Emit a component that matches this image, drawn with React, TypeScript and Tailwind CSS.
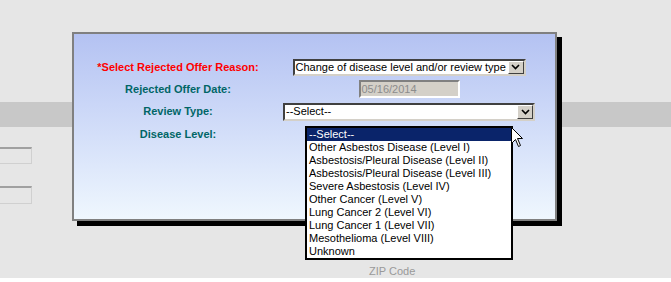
const font = { fontFamily: '"Liberation Sans", Arial, sans-serif' };

const reasons = [
  "Other Asbestos Disease (Level I)",
  "Asbestosis/Pleural Disease (Level II)",
  "Asbestosis/Pleural Disease (Level III)",
  "Severe Asbestosis (Level IV)",
  "Other Cancer (Level V)",
  "Lung Cancer 2 (Level VI)",
  "Lung Cancer 1 (Level VII)",
  "Mesothelioma (Level VIII)",
  "Unknown",
];

const Chevron = () => (
  <svg width="9" height="6" viewBox="0 0 9 6">
    <path d="M1 1 L4.5 4.5 L8 1" fill="none" stroke="#000" strokeWidth="1.6" />
  </svg>
);

const ArrowButton = () => (
  <div className="flex h-full w-[16px] shrink-0 items-center justify-center border border-t-[#fff] border-l-[#fff] border-r-[#404040] border-b-[#404040] bg-[#d4d0c8]">
    <Chevron />
  </div>
);

const Select = ({ text, width, height }: { text: string; width: string; height: string }) => (
  <div
    className={`flex ${width} ${height} items-stretch border-2 border-t-[#404040] border-l-[#404040] border-r-[#d4d0c8] border-b-[#d4d0c8] bg-white font-normal`}
  >
    <div className="flex flex-1 items-center overflow-hidden whitespace-nowrap pl-[1px] text-[11px] text-black">
      {text}
    </div>
    <ArrowButton />
  </div>
);

const Cursor = () => (
  <svg width="13" height="21" viewBox="0 0 13 21" className="absolute left-[511px] top-[127px]">
    <path
      d="M0.5 0.5 L0.5 16.5 L4.5 12.5 L7.5 19.5 L9.5 18.5 L6.5 11.5 L11.5 11.5 Z"
      fill="#fff"
      stroke="#000"
      strokeWidth="1"
    />
  </svg>
);

const App = () => {
  return (
    <div className="relative h-[282px] w-[671px] overflow-hidden bg-white" style={font}>
      {/* page behind the dialog */}
      <div className="flex h-[278px] flex-col bg-[#e6e6e6]">
        <div className="h-[103px]" />
        <div className="h-[25px] bg-[#c8c8c8]" />
        <div className="ml-[-60px] mt-[20px] h-[17px] w-[92px] border border-t-2 border-[#d0d0d0] border-t-[#a0a0a0]" />
        <div className="ml-[-60px] mt-[22px] h-[18px] w-[92px] border border-t-2 border-[#d0d0d0] border-t-[#a0a0a0]" />
        <div className="ml-[369px] mt-[61px] text-[11px] leading-[13px] text-[#999]">ZIP Code</div>
      </div>

      {/* dialog */}
      <div className="absolute left-[72px] top-[32px] h-[189px] w-[485px] border-2 border-[#808080] bg-gradient-to-b from-[#b4c2f2] to-[#eff7fe] shadow-[5px_5px_0_#000]">
        <div className="flex flex-col pt-[22px] text-[11px] font-bold">
          <div className="flex h-[22px] items-center">
            <div className="w-[208px] text-center text-[#ff0000]">*Select Rejected Offer Reason:</div>
            <div className="flex w-[254px] justify-center">
              <Select text="Change of disease level and/or review type" width="w-[233px]" height="h-[17px]" />
            </div>
          </div>
          <div className="flex h-[22px] items-center">
            <div className="w-[208px] text-center text-[#006666]">Rejected Offer Date:</div>
            <div className="flex w-[254px] justify-center">
              <div className="flex h-[18px] w-[101px] items-center border-2 border-t-[#808080] border-l-[#808080] border-r-[#fff] border-b-[#fff] bg-[#d4d0c8] pl-[1px] text-[11px] font-normal text-[#8c8c8c]">
                05/16/2014
              </div>
            </div>
          </div>
          <div className="flex h-[23px] items-center">
            <div className="w-[208px] text-center text-[#006666]">Review Type:</div>
            <div className="flex w-[254px] justify-center">
              <Select text="--Select--" width="w-[252px]" height="h-[18px]" />
            </div>
          </div>
          <div className="flex h-[23px] items-center">
            <div className="w-[208px] text-center text-[#006666]">Disease Level:</div>
          </div>
        </div>
      </div>

      {/* open dropdown list */}
      <div className="absolute left-[305px] top-[126px] w-[208px] border-2 border-black bg-white text-[11px]">
        <div className="flex h-[13px] items-center bg-[#0a246a] pl-[2px] text-white">--Select--</div>
        {reasons.map((r) => (
          <div key={r} className="flex h-[13px] items-center whitespace-nowrap pl-[2px] text-[#000]">
            {r}
          </div>
        ))}
      </div>

      <Cursor />
    </div>
  );
};

export default App;
